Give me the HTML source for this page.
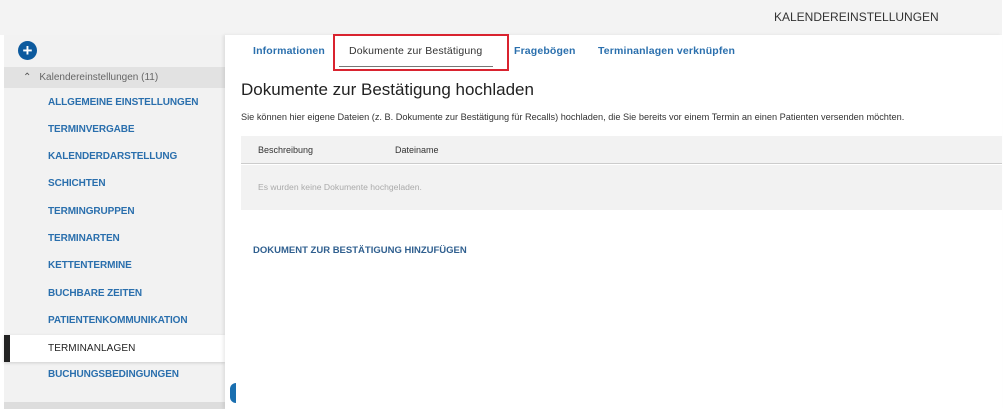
<!DOCTYPE html>
<html><head><meta charset="utf-8"><style>
*{margin:0;padding:0;box-sizing:border-box}
body{width:1006px;height:409px;overflow:hidden;background:#fff;font-family:"Liberation Sans",Arial,sans-serif;position:relative}
.top{position:absolute;left:0;top:0;width:1002px;height:35px;background:#f3f3f3}
.top span{position:absolute;left:774px;top:10px;font-size:12px;color:#333}
.side{position:absolute;left:4px;top:35px;width:221px;height:374px;background:#f2f2f2}
.plus{position:absolute;left:18px;top:41px;width:19px;height:19px;border-radius:50%;background:#0c5a9e;color:#fff;font-weight:bold;font-size:17px;line-height:19px;text-align:center}
.grp{position:absolute;left:4px;top:67px;width:221px;height:21px;background:#e2e2e2;font-size:10px;color:#666;line-height:21px;padding-left:19px}
.grp b{font-weight:normal;font-size:10px;margin-right:8px;color:#555}
.it{position:absolute;left:48px;font-size:10px;font-weight:bold;color:#2a6fad;letter-spacing:-.1px}
.act{position:absolute;left:4px;top:335px;width:221px;height:27px;background:#fff;border-left:6px solid #222;box-shadow:0 1px 3px rgba(0,0,0,.15)}
.act span{position:absolute;left:38px;top:8px;font-size:10px;color:#222;letter-spacing:.1px}
.bot{position:absolute;left:4px;top:402px;width:221px;height:7px;background:#ddd}
.main{position:absolute;left:225px;top:35px;width:777px;height:374px;background:#fff;box-shadow:-2px 0 3px rgba(0,0,0,.08)}
.tab{position:absolute;top:45px;font-size:10.5px;font-weight:bold;color:#2a6fad;letter-spacing:.15px}
.red{position:absolute;left:333px;top:34px;width:176px;height:37px;border:2px solid #d9232f}
.ul{position:absolute;left:339px;top:66px;width:154px;height:1px;background:#777}
h1{position:absolute;left:241px;top:80px;font-size:17px;font-weight:normal;color:#222}
.p{position:absolute;left:241px;top:112px;font-size:9.2px;color:#333;white-space:nowrap}
.th{position:absolute;left:241px;top:136px;width:761px;height:28px;background:#f2f2f2;border-bottom:1px solid #ccc;font-size:9px;color:#333}
.tb{position:absolute;left:241px;top:165px;width:761px;height:45px;background:#f2f2f2;font-size:8.6px;color:#aaa}
.link{position:absolute;left:253px;top:245px;font-size:9.5px;font-weight:bold;color:#2f5f8f;letter-spacing:0}
.hand{position:absolute;left:230px;top:383px;width:6px;height:20px;background:#1a6fb0;border-radius:6px 0 0 6px}
</style></head><body>
<div class="top"><span>KALENDEREINSTELLUNGEN</span></div>
<div class="side"></div>
<div class="plus">+</div>
<div class="grp"><b>&#8963;</b>Kalendereinstellungen (11)</div>
<div class="it" style="top:97px">ALLGEMEINE EINSTELLUNGEN</div>
<div class="it" style="top:124px">TERMINVERGABE</div>
<div class="it" style="top:151px">KALENDERDARSTELLUNG</div>
<div class="it" style="top:178px">SCHICHTEN</div>
<div class="it" style="top:206px">TERMINGRUPPEN</div>
<div class="it" style="top:233px">TERMINARTEN</div>
<div class="it" style="top:260px">KETTENTERMINE</div>
<div class="it" style="top:288px">BUCHBARE ZEITEN</div>
<div class="it" style="top:315px">PATIENTENKOMMUNIKATION</div>
<div class="act"><span>TERMINANLAGEN</span></div>
<div class="it" style="top:369px">BUCHUNGSBEDINGUNGEN</div>
<div class="bot"></div>
<div class="main"></div>
<div class="tab" style="left:253px">Informationen</div>
<div class="tab" style="left:349px;color:#333;font-weight:normal">Dokumente zur Bestätigung</div>
<div class="tab" style="left:514px">Fragebögen</div>
<div class="tab" style="left:598px">Terminanlagen verknüpfen</div>
<div class="red"></div>
<div class="ul"></div>
<h1>Dokumente zur Bestätigung hochladen</h1>
<div class="p">Sie können hier eigene Dateien (z. B. Dokumente zur Bestätigung für Recalls) hochladen, die Sie bereits vor einem Termin an einen Patienten versenden möchten.</div>
<div class="th"><span style="position:absolute;left:17px;top:9px">Beschreibung</span><span style="position:absolute;left:154px;top:9px">Dateiname</span></div>
<div class="tb"><span style="position:absolute;left:17px;top:17px">Es wurden keine Dokumente hochgeladen.</span></div>
<div class="link">DOKUMENT ZUR BESTÄTIGUNG HINZUFÜGEN</div>
<div class="hand"></div>
</body></html>
